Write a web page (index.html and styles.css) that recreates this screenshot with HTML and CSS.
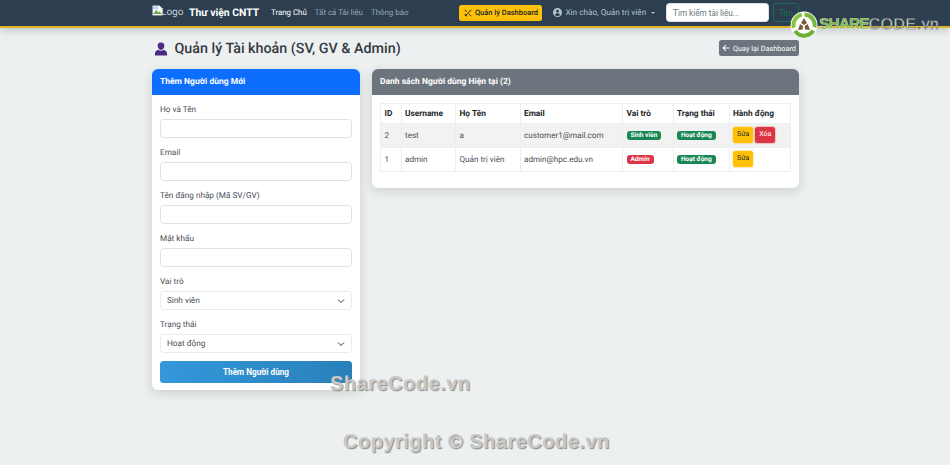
FILE: index.html
```html
<!DOCTYPE html>
<html lang="vi">
<head>
<meta charset="utf-8">
<title>Quản lý Tài khoản</title>
<link rel="stylesheet" href="styles.css">
</head>
<body>
<nav class="navbar">
  <div class="nav-inner">
    <span class="logo">
      <svg class="broken" viewBox="0 0 16 16" width="11" height="11"><path d="M1 1h10l4 4v10H1z" fill="#fff" stroke="#9aa5ad" stroke-width="1"/><path d="M2 13l4-6 3 4 2-2 3 4z" fill="#6aa84f"/><path d="M2 2h7v4H2z" fill="#b7d3f2"/></svg><span class="logo-alt">Logo</span>
    </span>
    <span class="brand">Thư viện CNTT</span>
    <a class="nav-link active">Trang Chủ</a>
    <a class="nav-link">Tất cả Tài liệu</a>
    <a class="nav-link">Thông báo</a>
    <a class="dash-btn">
      <svg viewBox="0 0 16 16" width="8" height="8"><path d="M2 1l4 4-1 1-4-4zM14 1l1 1L5 12l1 2-2 1-3-3 1-2 2 1zM10 9l5 5-1 1-5-5z" fill="#212529"/></svg>
      Quản lý Dashboard
    </a>
    <a class="user">
      <svg viewBox="0 0 16 16" width="9" height="9"><path fill-rule="evenodd" d="M8 0a8 8 0 110 16A8 8 0 018 0zm0 3a2.6 2.6 0 100 5.200A2.600 2.600 0 008 3zM3.300 12.200A5.800 5.800 0 008 14.500a5.800 5.800 0 004.700-2.300C12 10.600 10 9.500 8 9.500s-4 1.100-4.700 2.700z" fill="#b9c3cb"/></svg>
      Xin chào, Quản trị viên
      <i class="caret"></i>
    </a>
    <form class="search">
      <input class="search-input" type="text" placeholder="Tìm kiếm tài liệu...">
      <button class="search-btn" type="button">Tìm</button>
    </form>
  </div>
</nav>

<main class="container">
  <div class="title-row">
    <h1 class="title">
      <svg viewBox="0 0 16 16" width="14" height="14"><path d="M8 0.500a3.800 3.800 0 013.800 3.800c0 2.300-1.600 4.700-3.800 4.700S4.200 6.600 4.200 4.300A3.800 3.800 0 018 .500zM5 8.800c.8.800 1.900 1.200 3 1.200s2.200-.4 3-1.200c1.800.5 3.500 1.700 3.800 3.700l.2 3H1l.2-3C1.500 10.500 3.200 9.300 5 8.800z" fill="#4b2a7f"/></svg>
      Quản lý Tài khoản (SV, GV &amp; Admin)
    </h1>
    <a class="back-btn">
      <svg viewBox="0 0 16 16" width="8" height="8"><path d="M15 7H4.500l4-4L7 1.600 .8 8 7 14.400 8.500 13l-4-4H15z" fill="#fff"/></svg>
      Quay lại Dashboard
    </a>
  </div>

  <div class="columns">
    <section class="card card-form">
      <header class="card-head head-blue">Thêm Người dùng Mới</header>
      <form class="card-body form">
        <div class="field"><label>Họ và Tên</label><input class="control" type="text"></div>
        <div class="field"><label>Email</label><input class="control" type="text"></div>
        <div class="field"><label>Tên đăng nhập (Mã SV/GV)</label><input class="control" type="text"></div>
        <div class="field"><label>Mật khẩu</label><input class="control" type="text"></div>
        <div class="field"><label>Vai trò</label>
          <div class="select">Sinh viên<svg viewBox="0 0 16 16" width="8" height="8"><path d="M2 5l6 6 6-6" fill="none" stroke="#343a40" stroke-width="2"/></svg></div></div>
        <div class="field"><label>Trạng thái</label>
          <div class="select">Hoạt động<svg viewBox="0 0 16 16" width="8" height="8"><path d="M2 5l6 6 6-6" fill="none" stroke="#343a40" stroke-width="2"/></svg></div></div>
        <button class="submit" type="button">Thêm Người dùng</button>
      </form>
    </section>

    <section class="card card-list">
      <header class="card-head head-grey">Danh sách Người dùng Hiện tại (2)</header>
      <div class="card-body list-body">
        <table class="table">
          <thead>
            <tr>
              <th class="c-id">ID</th><th class="c-user">Username</th><th class="c-name">Họ Tên</th><th class="c-mail">Email</th><th class="c-role">Vai trò</th><th class="c-state">Trạng thái</th><th>Hành động</th>
            </tr>
          </thead>
          <tbody>
            <tr class="striped">
              <td>2</td><td>test</td><td>a</td><td>customer1@mail.com</td>
              <td><span class="badge green">Sinh viên</span></td>
              <td><span class="badge green">Hoạt động</span></td>
              <td class="acts"><a class="act edit">Sửa</a><a class="act del">Xóa</a></td>
            </tr>
            <tr>
              <td>1</td><td>admin</td><td>Quản trị viên</td><td>admin@hpc.edu.vn</td>
              <td><span class="badge red">Admin</span></td>
              <td><span class="badge green">Hoạt động</span></td>
              <td class="acts"><a class="act edit">Sửa</a></td>
            </tr>
          </tbody>
        </table>
      </div>
    </section>
  </div>
</main>

<div class="wm-logo">
  <svg viewBox="0 0 30 30" width="30" height="30">
    <circle cx="15" cy="15" r="13.500" fill="#fff"/>
    <path d="M15.500 2.500A12.500 12.500 0 0127.300 18l-3.800-1.500A8.500 8.500 0 0015.500 6.500z" fill="#7cb83f"/>
    <path d="M26 21.500A12.500 12.500 0 014.500 22l3.300-2.300a8.500 8.500 0 0014.600-.3z" fill="#6faf35"/>
    <path d="M3 18.500A12.500 12.500 0 0112.500 2.800l.6 3.800A8.500 8.500 0 006.800 17z" fill="#86c440"/>
    <path d="M15 8l3 5-3 2-3-2zM9 20l2-6 3 2-.3 3.500zM21 20l-5-.5-.3-3.500 3-2z" fill="#7a5a3a"/>
  </svg>
  <span class="wm-share">SHARE</span><span class="wm-code">CODE</span><span class="wm-vn">.vn</span>
</div>
<div class="wm-text wm-mid">ShareCode.vn</div>
<div class="wm-text wm-copy">Copyright © ShareCode.vn</div>
</body>
</html>
```

FILE: styles.css
```css
* { box-sizing: border-box; }
html, body { height: 100%; }
body {
  margin: 0;
  background: #ecf0f1;
  color: #343a40;
  font-family: Roboto, "Noto Sans", sans-serif;
  font-size: 8.200px;
  text-rendering: geometricPrecision;
  overflow: hidden;
  position: relative;
}
a { text-decoration: none; }

.navbar {
  height: 27.500px;
  background: #2c3e50;
  border-bottom: 2px solid #e0b52a;
  box-shadow: 0 2px 8px rgba(0,0,0,.2);
}
.nav-inner {
  width: 647px;
  margin-left: 152px;
  height: 25px;
  display: flex;
  align-items: center;
}
.logo { display: flex; align-items: flex-start; width: 37px; color: #c9d2d9; font-size: 10px; }
.logo .broken { margin-top: -2px; flex: none; }
.logo-alt { margin-left: -2px; }
.brand { color: #fff; font-weight: 700; font-size: 10.400px; width: 82px; white-space: nowrap; }
.nav-link { color: #9aa6b0; font-size: 7.900px; margin-right: 8px; white-space: nowrap; }
.nav-link.active { color: #fff; }
.dash-btn {
  margin-left: 43px;
  height: 16px;
  width: 83px;
  background: #ffc107;
  border-radius: 2.500px;
  color: #212529;
  font-weight: 500;
  font-size: 7.500px;
  display: flex;
  align-items: center;
  justify-content: center;
  gap: 3px;
  white-space: nowrap;
}
.user {
  margin-left: 11px;
  color: #b9c3cb;
  display: flex;
  align-items: center;
  gap: 3px;
  white-space: nowrap;
}
.caret {
  margin-left: 2px;
  border-top: 2.500px solid #b9c3cb;
  border-left: 2.500px solid transparent;
  border-right: 2.500px solid transparent;
}
.search { margin-left: auto; display: flex; gap: 4px; }
.search-input {
  width: 103px;
  height: 19px;
  border: 1px solid #dee2e6;
  border-radius: 3.500px;
  padding: 0 6px;
  font: inherit;
  background: #fff;
}
.search-input::placeholder { color: #6c757d; opacity: 1; }
.search-btn {
  width: 26px;
  height: 19px;
  padding: 0;
  background: transparent;
  border: 1px solid #1b6e56;
  border-radius: 3px;
  color: #1b6e56;
  font: inherit;
}

.container { width: 647px; margin-left: 152px; }
.title-row {
  height: 41.500px;
  display: flex;
  align-items: center;
  justify-content: space-between;
}
.title {
  margin: 0;
  padding: 1px 0 0 2px;
  font-size: 14.300px;
  font-weight: 500;
  color: #343a40;
  display: flex;
  align-items: center;
  gap: 6.500px;
}
.back-btn {
  height: 16px;
  width: 80px;
  background: #6c757d;
  border-radius: 2.500px;
  color: #fff;
  font-size: 7.300px;
  display: flex;
  align-items: center;
  justify-content: center;
  gap: 3px;
  white-space: nowrap;
}

.columns { display: flex; align-items: flex-start; gap: 12px; }
.card {
  background: #fff;
  border-radius: 6px;
  box-shadow: 0 3px 11px rgba(0,0,0,.14);
  overflow: hidden;
}
.card-form { width: 208px; }
.card-list { width: 427px; }
.card-head {
  height: 26px;
  padding: 0 8px;
  display: flex;
  align-items: center;
  color: #fff;
  font-weight: 700;
  font-size: 8.500px;
}
.head-blue { background: #0d6efd; }
.head-grey { background: #6c757d; }
.card-body { padding: 8px; }
.list-body { padding-bottom: 16px; }
.form { display: flex; flex-direction: column; gap: 8px; padding-bottom: 7px; }
.field label {
  display: block;
  height: 16px;
  line-height: 15px;
  color: #495057;
}
.control {
  display: block;
  width: 100%;
  height: 19px;
  border: 1px solid #dee2e6;
  border-radius: 3.500px;
  background: #fff;
}
.select {
  height: 19px;
  border: 1px solid #e9ecef;
  border-radius: 3.500px;
  padding: 0 6px;
  display: flex;
  align-items: center;
  justify-content: space-between;
  color: #495057;
}
.submit {
  height: 22px;
  border: 0;
  border-radius: 3.500px;
  background: linear-gradient(90deg, #3498db, #2980b9);
  color: #fff;
  font: inherit;
  font-weight: 700;
  padding: 0;
}

.table { width: 100%; border-collapse: collapse; table-layout: fixed; color: #495057; }
.table th, .table td { border: 1px solid #eceef0; padding: 0 3.500px 1px; text-align: left; white-space: nowrap; }
.table th { height: 20px; color: #212529; font-weight: 700; font-size: 8.300px; padding-bottom: 0; }
.table td { height: 24px; font-size: 8.100px; }
.striped { background: #f2f2f2; }
.c-id { width: 20.500px; }
.c-user { width: 54.500px; }
.c-name { width: 64.500px; }
.c-mail { width: 102.500px; }
.c-role { width: 50.500px; }
.c-state { width: 56px; }
.badge {
  display: inline-block;
  height: 9.500px;
  line-height: 9.500px;
  padding: 0 4px;
  border-radius: 3px;
  color: #fff;
  font-weight: 700;
  font-size: 6.500px;
  vertical-align: 1px;
}
.green { background: #198754; }
.red { background: #dc3545; }
.table td.acts { font-size: 0; }
.act {
  display: inline-block;
  height: 15.500px;
  line-height: 15.500px;
  padding: 0 4px;
  border-radius: 2.500px;
  font-size: 7px;
  margin-right: 2px;
}
.edit { background: #ffc107; color: #212529; box-shadow: 0 0 1px 1px rgba(255,193,7,.3); }
.del { background: #dc3545; color: #fff; box-shadow: 0 0 1px 1px rgba(220,53,69,.25); }

.wm-logo {
  position: absolute;
  left: 789px;
  top: 10px;
  display: flex;
  align-items: center;
  font-family: "Liberation Sans", sans-serif;
  font-size: 15.500px;
  line-height: 30px;
}
.wm-share { color: #7cb83f; font-weight: 700; letter-spacing: -.9px; -webkit-text-stroke: .3px #fff; }
.wm-code { color: #fff; letter-spacing: .8px; -webkit-text-stroke: .6px #55645a; }
.wm-vn { color: #fff; letter-spacing: .6px; -webkit-text-stroke: .6px #55645a; }
.wm-text {
  position: absolute;
  font-family: "Liberation Sans", sans-serif;
  font-weight: 700;
  font-size: 20px;
  line-height: 24px;
  color: #c8c8c8;
  text-shadow: 1px 1px 1px #8a8a8a;
  letter-spacing: .5px;
  white-space: nowrap;
}
.wm-mid { left: 330px; top: 372px; }
.wm-copy { left: 343px; top: 430px; }
```
